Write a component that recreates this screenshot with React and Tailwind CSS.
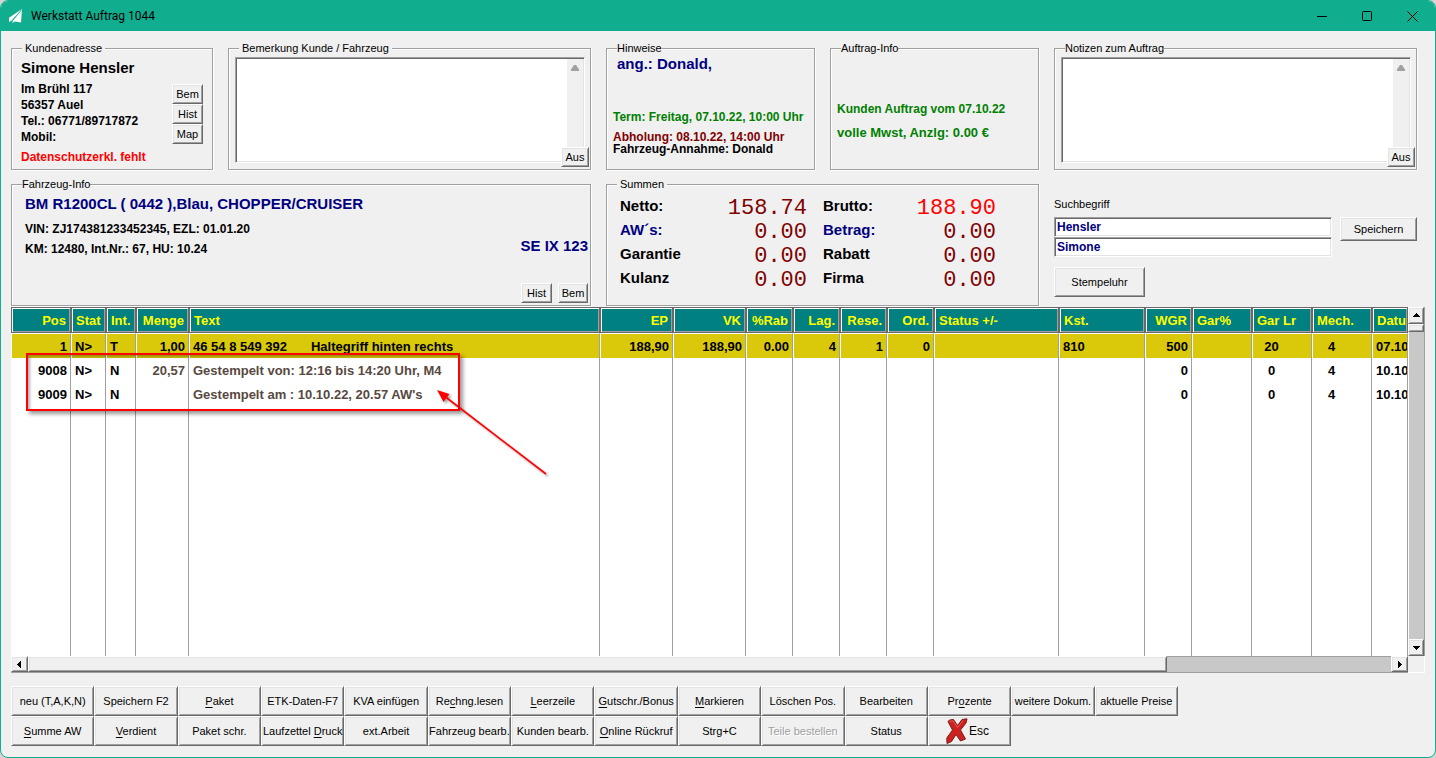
const RAISED =
  'bg-[#f0f0f0] border border-t-white border-l-white border-r-[#696969] border-b-[#696969] shadow-[inset_1px_1px_0_#e3e3e3,inset_-1px_-1px_0_#a0a0a0]';
const SUNKEN =
  'bg-white border border-t-[#a0a0a0] border-l-[#a0a0a0] border-r-white border-b-white shadow-[inset_1px_1px_0_#696969,inset_-1px_-1px_0_#e3e3e3]';

const columns = [
  { title: 'Pos', width: 'w-[60px]', align: 'text-right' },
  { title: 'Stat', width: 'w-[35px]', align: 'text-left' },
  { title: 'Int.', width: 'w-[30px]', align: 'text-left' },
  { title: 'Menge', width: 'w-[53px]', align: 'text-right' },
  { title: 'Text', width: '', align: 'text-left' },
  { title: 'EP', width: 'w-[73px]', align: 'text-right' },
  { title: 'VK', width: 'w-[73px]', align: 'text-right' },
  { title: '%Rab', width: 'w-[47px]', align: 'text-right' },
  { title: 'Lag.', width: 'w-[47px]', align: 'text-right' },
  { title: 'Rese.', width: 'w-[47px]', align: 'text-right' },
  { title: 'Ord.', width: 'w-[47px]', align: 'text-right' },
  { title: 'Status +/-', width: 'w-[125px]', align: 'text-left' },
  { title: 'Kst.', width: 'w-[86px]', align: 'text-left' },
  { title: 'WGR', width: 'w-[47px]', align: 'text-right' },
  { title: 'Gar%', width: 'w-[60px]', align: 'text-left' },
  { title: 'Gar Lr', width: 'w-[60px]', align: 'text-left', cell: 'text-center pl-[3px] pr-6' },
  { title: 'Mech.', width: 'w-[60px]', align: 'text-left', cell: 'text-center pl-[3px] pr-6' },
  { title: 'Datum', width: 'w-[36px]', align: 'text-left' },
];

const rows = [
  {
    selected: true,
    cells: ['1', 'N>', 'T', '1,00', ['46 54 8 549 392', 'Haltegriff hinten rechts'], '188,90', '188,90', '0.00', '4', '1', '0', '', '810', '500', '', '20', '4', '07.10.22'],
  },
  {
    cells: ['9008', 'N>', 'N', '20,57', 'Gestempelt von: 12:16 bis 14:20 Uhr, M4', '', '', '', '', '', '', '', '', '0', '', '0', '4', '10.10.22'],
  },
  {
    cells: ['9009', 'N>', 'N', '', "Gestempelt am : 10.10.22, 20.57 AW's", '', '', '', '', '', '', '', '', '0', '', '0', '4', '10.10.22'],
  },
];

// "&" marks the underlined shortcut letter
const actionsTop = [
  'neu (T,A,K,N)', 'Speichern F2', '&Paket', 'ETK-Daten-F7', 'KVA einfügen', 'Re&chng.lesen', '&Leerzeile',
  '&Gutschr./Bonus', '&Markieren', 'Löschen Pos.', 'Bearbeiten', 'Pr&ozente', 'weitere Dokum.', 'aktuelle Preise',
];
const actionsBottom = [
  '&Summe AW', '&Verdient', 'Paket schr.', 'Laufzettel &Druck', 'ext.Arbeit', 'Fahrzeug bearb.', 'Kunden bearb.',
  '&Online Rückruf', 'Strg+C', 'Teile bestellen', 'Status',
];

const sumsLeft = [
  { label: 'Netto:', value: '158.74' },
  { label: 'AW´s:', value: '0.00', navy: true },
  { label: 'Garantie', value: '0.00' },
  { label: 'Kulanz', value: '0.00' },
];
const sumsRight = [
  { label: 'Brutto:', value: '188.90', red: true },
  { label: 'Betrag:', value: '0.00', navy: true },
  { label: 'Rabatt', value: '0.00' },
  { label: 'Firma', value: '0.00' },
];

const Caption = ({ text }) => {
  const at = text.indexOf('&');
  if (at < 0) return <span>{text}</span>;
  return (
    <span>
      {text.slice(0, at)}
      <u className="underline-offset-2">{text[at + 1]}</u>
      {text.slice(at + 2)}
    </span>
  );
};

const Button = ({ className = '', children, ...rest }) => (
  <button
    type="button"
    className={`flex items-center justify-center overflow-hidden whitespace-nowrap text-[11px] leading-[14px] ${RAISED} ${className}`}
    {...rest}
  >
    {children}
  </button>
);

const Group = ({ title, padded, className = '', children }) => (
  <fieldset
    className={`relative min-w-0 min-h-[129px] border border-[#a0a0a0] shadow-[1px_1px_0_#fff,inset_1px_1px_0_#fff] ${className}`}
  >
    <legend className={`ml-[10px] bg-[#f0f0f0] text-[11px] leading-[14px] ${padded ? 'px-[3px]' : ''}`}>{title}</legend>
    {children}
  </fieldset>
);

const NoteGroup = ({ title, padded, id }) => (
  <Group title={title} padded={padded}>
    <div className={`mt-[2px] ml-[6px] mr-[5px] flex h-[106px] p-px ${SUNKEN}`}>
      <textarea id={id} aria-label={title} className="min-w-0 flex-1 resize-none bg-transparent p-1 text-xs outline-none" />
      <div className="w-4 bg-[#f0f0f0] pt-[6px]">
        <svg className="mx-auto" width="10" height="6" viewBox="0 0 10 6">
          <path d="M4 0h2L9 4.6V6H1V4.6z" fill="#a0a0a0" />
        </svg>
      </div>
    </div>
    <Button className="absolute right-px -bottom-1 h-5 w-7">Aus</Button>
  </Group>
);

const SumList = ({ items }) => (
  <div>
    {items.map((s) => (
      <div key={s.label} className="flex h-6 items-center justify-between">
        <span className={`text-[15px] leading-5 font-bold ${s.navy ? 'text-[#000080]' : 'text-black'}`}>{s.label}</span>
        <span
          className={`pt-[5px] font-['Liberation_Mono','Courier_New',monospace] text-[22px] leading-5 ${s.red ? 'text-[#ff0000]' : 'text-[#800000]'}`}
        >
          {s.value}
        </span>
      </div>
    ))}
  </div>
);

const Arrow = ({ d }) => (
  <svg width="7" height="7" viewBox="0 0 7 7" fill="#000">
    <path d={d} />
  </svg>
);

const TitleBar = () => (
  <header className="flex h-[30px] shrink-0 items-center bg-[#10ae8f] text-black">
    <svg className="ml-2 mr-[9px] shrink-0" width="13" height="14" viewBox="0 0 13 14" fill="#fff">
      <path d="M13 0 0 8.8V13l2.6-1.6z" />
      <path d="M13 0 4.2 11 3 14l3-1.6 6 1.2z" />
      <path d="M12.6 .8 3.2 12.2" stroke="#10ae8f" strokeWidth=".8" fill="none" />
    </svg>
    <h1 className="flex-1 font-['Roboto',sans-serif] text-xs leading-4">Werkstatt Auftrag 1044</h1>
    <button type="button" aria-label="Minimieren" className="flex h-full w-[45px] items-center justify-center">
      <svg width="11" height="11" viewBox="0 0 11 11" stroke="#000"><path d="M0 5.5h10" /></svg>
    </button>
    <button type="button" aria-label="Maximieren" className="flex h-full w-[45px] items-center justify-center">
      <svg width="11" height="11" viewBox="0 0 11 11" stroke="#000" fill="none"><rect x=".5" y=".5" width="9" height="9" rx="1" /></svg>
    </button>
    <button type="button" aria-label="Schließen" className="flex h-full w-[45px] items-center justify-center">
      <svg width="11" height="11" viewBox="0 0 11 11" stroke="#000"><path d="M.5.5l10 10M10.500.5l-10 10" /></svg>
    </button>
  </header>
);

const PositionTable = () => (
  <table className="h-full w-full table-fixed border-separate border-spacing-0 bg-white text-[13px] leading-4 font-bold">
    <thead>
      <tr>
        {columns.map((c) => (
          <th
            key={c.title}
            className={`h-[26px] overflow-hidden whitespace-nowrap border border-[#696969] bg-[#008080] px-1 pt-[2px] pb-0 font-bold text-[#ffff00] shadow-[inset_1px_1px_0_#fff,inset_-1px_-1px_0_#a0a0a0] ${c.width} ${c.align}`}
          >
            {c.title}
          </th>
        ))}
      </tr>
    </thead>
    <tbody>
      {rows.map((row) => (
        <tr key={row.cells[0]} className="group">
          {columns.map((c, i) => {
            const value = row.cells[i];
            const muted = !row.selected && (i === 3 || i === 4);
            return (
              <td
                key={c.title}
                className={`h-6 overflow-hidden whitespace-nowrap border-l border-r border-l-white border-r-[#a0a0a0] border-t-white pt-[2px] pb-0 group-first:h-[25px] group-first:border-t ${
                  row.selected ? 'bg-[#dac80b] bg-clip-padding' : ''
                } ${muted ? 'text-[#57493f]' : 'text-black'} ${c.cell || `px-[3px] ${c.align}`}`}
              >
                {Array.isArray(value) ? (
                  <span className="flex gap-6">
                    <span>{value[0]}</span>
                    <span>{value[1]}</span>
                  </span>
                ) : (
                  value
                )}
              </td>
            );
          })}
        </tr>
      ))}
      <tr className="h-full">
        {columns.map((c) => (
          <td key={c.title} className="border-r border-[#a0a0a0] p-0" />
        ))}
      </tr>
    </tbody>
  </table>
);

export default function App() {
  return (
    <div className="bg-[#d8d4d6]">
      <div className="flex h-screen min-h-[560px] flex-col overflow-hidden rounded-lg border border-[#10ae8f] bg-[#f0f0f0] font-['Liberation_Sans',Arial,sans-serif] text-black">
        <TitleBar />

        <main className="flex min-h-0 flex-1 flex-col pt-[10px] pr-[10px] pb-[11px] pl-[10px]">
          <div className="grid shrink-0 grid-cols-[202fr_363fr_209fr_209fr_363fr] gap-x-[15px] gap-y-[7px] pr-2">
            <Group title="Kundenadresse" padded>
              <div className="flex justify-between pt-[3px] pr-[9px] pl-[9px]">
                <div className="text-xs leading-4 font-bold whitespace-nowrap">
                  <h2 className="mb-[3px] text-[15px] leading-5">Simone Hensler</h2>
                  <p>Im Brühl 117</p>
                  <p>56357 Auel</p>
                  <p>Tel.: 06771/89717872</p>
                  <p>Mobil:</p>
                  <p className="mt-1 text-[#ff0000]">Datenschutzerkl. fehlt</p>
                </div>
                <div className="flex flex-col pt-[26px]">
                  <Button className="h-5 w-[31px]">Bem</Button>
                  <Button className="h-5 w-[31px]">Hist</Button>
                  <Button className="h-5 w-[31px]">Map</Button>
                </div>
              </div>
            </Group>

            <NoteGroup title="Bemerkung Kunde / Fahrzeug" padded id="bemerkung" />

            <Group title="Hinweise">
              <div className="pl-[6px] text-xs font-bold whitespace-nowrap">
                <p className="pl-1 text-[15px] leading-[18px] text-[#000080]">ang.: Donald,</p>
                <p className="mt-9 leading-4 text-[#008000]">Term: Freitag, 07.10.22, 10:00 Uhr</p>
                <p className="mt-[6px] leading-3 text-[#800000]">Abholung: 08.10.22, 14:00 Uhr</p>
                <p className="leading-3">Fahrzeug-Annahme: Donald</p>
              </div>
            </Group>

            <Group title="Auftrag-Info">
              <div className="pt-[46px] pl-[6px] leading-4 font-bold whitespace-nowrap text-[#008000]">
                <p className="text-xs leading-4">Kunden Auftrag vom 07.10.22</p>
                <p className="mt-2 text-[13px]">volle Mwst, Anzlg: 0.00 €</p>
              </div>
            </Group>

            <NoteGroup title="Notizen zum Auftrag" id="notizen" />

            <Group title="Fahrzeug-Info" className="col-span-2">
              <div className="flex justify-between pr-[2px] pl-[13px] font-bold whitespace-nowrap">
                <div className="pt-[3px] text-xs leading-4">
                  <h2 className="mb-[7px] text-[15px] leading-5 text-[#000080]">BM R1200CL ( 0442 ),Blau, CHOPPER/CRUISER</h2>
                  <p>VIN: ZJ174381233452345, EZL: 01.01.20</p>
                  <p className="mt-1">KM: 12480, Int.Nr.: 67, HU: 10.24</p>
                </div>
                <div className="flex flex-col items-end pt-[45px]">
                  <p className="text-[15px] leading-5 text-[#000080]">SE IX 123</p>
                  <div className="mt-[27px] flex gap-[6px] font-normal">
                    <Button className="h-5 w-[31px]">Hist</Button>
                    <Button className="h-5 w-[30px]">Bem</Button>
                  </div>
                </div>
              </div>
            </Group>

            <Group title="Summen" padded className="col-span-2">
              <div className="grid grid-cols-[187fr_173fr] gap-4 pt-[3px] pr-[42px] pl-[13px]">
                <SumList items={sumsLeft} />
                <SumList items={sumsRight} />
              </div>
            </Group>

            <form className="min-w-0 pt-5" onSubmit={(e) => e.preventDefault()}>
              <label htmlFor="suchbegriff" className="block text-[11px] leading-[14px]">Suchbegriff</label>
              <div className="mt-[6px] flex items-start gap-2">
                <div className="flex min-w-0 flex-1 flex-col">
                  <input id="suchbegriff" defaultValue="Hensler" className={`h-5 w-full px-[2px] text-xs font-bold text-[#000080] outline-none ${SUNKEN}`} />
                  <input aria-label="Vorname" defaultValue="Simone" className={`h-5 w-full px-[2px] text-xs font-bold text-[#000080] outline-none ${SUNKEN}`} />
                </div>
                <Button className="h-6 w-[77px]">Speichern</Button>
              </div>
              <Button className="mt-[10px] h-[30px] w-[91px]">Stempeluhr</Button>
            </form>
          </div>

          <section className="mt-px flex min-h-0 flex-1 flex-col">
            <div className="flex min-h-0 flex-1">
              <div className="relative min-w-0 flex-1 overflow-hidden">
                <PositionTable />
                <div className="pointer-events-none absolute top-[46px] left-[15px] h-[58px] w-[434px] border-2 border-[#ff0000] shadow-[3px_3px_4px_rgba(0,0,0,0.4),inset_2px_2px_3px_rgba(0,0,0,0.3)]" />
                <svg
                  className="pointer-events-none absolute top-[80px] left-[422px] drop-shadow-[2px_2px_1px_rgba(0,0,0,0.35)]"
                  width="120" height="94" viewBox="0 0 120 94"
                >
                  <path d="M10 8 113 87" stroke="#ff0000" strokeWidth="1.6" />
                  <path d="M4 3 16.500 7 10.500 15z" fill="#ff0000" />
                </svg>
              </div>
              <div className="flex w-[17px] shrink-0 flex-col border-r border-[#a0a0a0] bg-[#c8c8c8]">
                <button type="button" aria-label="Nach oben" className={`flex h-[17px] shrink-0 items-center justify-center ${RAISED}`}>
                  <Arrow d="M3 1h1v1h1v1h1v1h1v1H0V4h1V3h1V2h1z" />
                </button>
                <div className={`h-2 shrink-0 ${RAISED}`} />
                <div className="flex-1 border-l border-white" />
                <button type="button" aria-label="Nach unten" className={`flex h-[17px] shrink-0 items-center justify-center ${RAISED}`}>
                  <Arrow d="M0 2h7v1H6v1H5v1H4v1H3V5H2V4H1V3H0z" />
                </button>
              </div>
            </div>
            <div className="flex h-[17px] shrink-0">
              <div className="flex min-w-0 flex-1 border-b border-[#a0a0a0] bg-[#c8c8c8]">
                <button type="button" aria-label="Nach links" className={`flex w-[17px] shrink-0 items-center justify-center ${RAISED}`}>
                  <Arrow d="M5 0v7H4V6H3V5H2V4H1V3h1V2h1V1h1V0z" />
                </button>
                <div className={`flex-[1139] ${RAISED}`} />
                <div className="flex-[224] border-t border-[#a0a0a0]" />
                <button type="button" aria-label="Nach rechts" className={`flex w-[17px] shrink-0 items-center justify-center ${RAISED}`}>
                  <Arrow d="M2 0h1v1h1v1h1v1h1v1H5v1H4v1H3v1H2z" />
                </button>
              </div>
              <div className="w-[17px] shrink-0 border-r border-b border-white" />
            </div>
          </section>

          <nav className="mt-[13px] grid shrink-0 auto-rows-[30px] grid-cols-[repeat(14,minmax(0,83fr))_minmax(0,246fr)]">
            {actionsTop.map((a) => (
              <Button key={a}><Caption text={a} /></Button>
            ))}
            <span />
            {actionsBottom.map((a) => (
              <Button
                key={a}
                disabled={a === 'Teile bestellen'}
                className={a === 'Teile bestellen' ? 'text-[#a0a0a0] [text-shadow:1px_1px_0_#fff]' : ''}
              >
                <Caption text={a} />
              </Button>
            ))}
            <Button className="pr-1">
              <svg className="mr-px shrink-0" width="22" height="26" viewBox="0 0 22 26">
                <path
                  d="M2 3.500 3.500 2 7.500 1.500 11.500 7.500 16 1.500 21 .8 20 5 14.500 12 19.500 21 14.500 23 10 16.500 5.500 23.500 1 25.500 .8 20 6.500 12z"
                  fill="#cf2020" stroke="#7a1c1c" strokeWidth="1" strokeLinejoin="round"
                />
                <path d="M3.500 3.500 7 2.800 11.500 9.500 17 2.800" stroke="#ec5a50" strokeWidth="1" fill="none" />
              </svg>
              <span className="text-xs">Esc</span>
            </Button>
          </nav>
        </main>
      </div>
    </div>
  );
}
